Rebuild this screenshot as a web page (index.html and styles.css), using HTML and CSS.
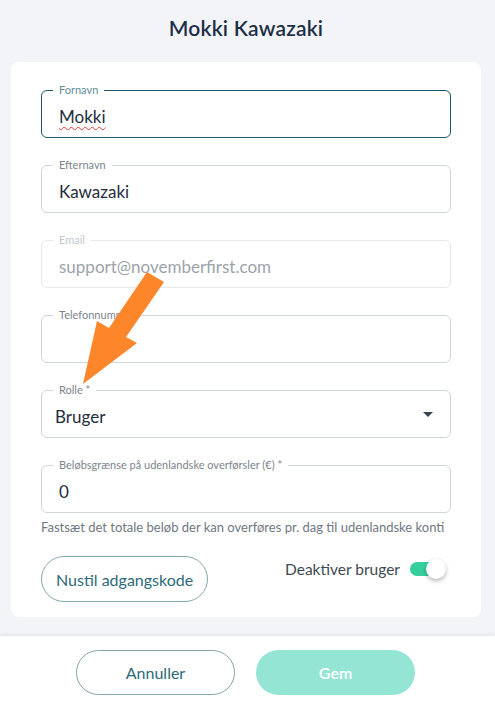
FILE: index.html
```html
<!DOCTYPE html>
<html lang="da">
<head>
  <meta charset="UTF-8">
  <meta name="viewport" content="width=device-width, initial-scale=1.0">
  <title>Mokki Kawazaki</title>
  <link rel="stylesheet" href="styles.css">
</head>
<body>
  <main class="page">
    <h1 class="title">Mokki Kawazaki</h1>

    <!-- User form card -->
    <section class="card">
      <div class="field focused">
        <span class="field-label">Fornavn</span>
        <span class="field-value spell">Mokki</span>
      </div>

      <div class="field">
        <span class="field-label">Efternavn</span>
        <span class="field-value">Kawazaki</span>
      </div>

      <div class="field disabled">
        <span class="field-label">Email</span>
        <span class="field-value">support@novemberfirst.com</span>
      </div>

      <div class="field">
        <span class="field-label">Telefonnummer</span>
        <span class="field-value"></span>
      </div>

      <div class="field select">
        <span class="field-label">Rolle *</span>
        <span class="field-value">Bruger</span>
        <span class="caret"></span>
      </div>

      <div class="field with-help">
        <span class="field-label">Beløbsgrænse på udenlandske overførsler (€) *</span>
        <span class="field-value">0</span>
      </div>
      <p class="help">Fastsæt det totale beløb der kan overføres pr. dag til udenlandske konti</p>

      <div class="card-actions">
        <button class="btn btn-outline btn-reset" type="button">Nustil adgangskode</button>
        <label class="toggle-row">
          <span>Deaktiver bruger</span>
          <span class="toggle"><span class="knob"></span></span>
        </label>
      </div>
    </section>

    <!-- Annotation arrow -->
    <svg class="arrow" width="100" height="120" viewBox="0 0 100 120">
      <polygon points="77,2 94,12 56,67 67,73 13,114 27,51 39,58" fill="#fd852a"/>
    </svg>
  </main>

  <footer class="footer">
    <button class="btn btn-outline" type="button">Annuller</button>
    <button class="btn btn-primary" type="button">Gem</button>
  </footer>
</body>
</html>
```

FILE: styles.css
```css
body {
  margin: 0;
  font-family: "Lato", "Noto Sans", sans-serif;
  background-color: #f3f4f7;
  color: #1f2d3d;
}

.page {
  position: relative;
  padding: 0 14px 19px 11px;
}

.title {
  margin: 0;
  padding: 15px 0 22px;
  text-align: center;
  font-size: 21px;
  font-weight: 600;
  color: #1c2f47;
  letter-spacing: 0.2px;
}

.card {
  background-color: #ffffff;
  border-radius: 8px;
  padding: 28px 30px 15px;
  display: flex;
  flex-direction: column;
  gap: 27px;
}

.field {
  position: relative;
  height: 46px;
  border: 1px solid #cfd5db;
  border-radius: 6px;
  display: flex;
  align-items: center;
  padding: 0 17px;
}

.field-label {
  position: absolute;
  top: -8px;
  left: 11px;
  padding: 0 6px;
  background-color: #ffffff;
  font-size: 11px;
  color: #7b848d;
  line-height: 14px;
}

.field-value {
  font-size: 17px;
  padding-top: 4px;
}

.spell {
  text-decoration: underline wavy #e53935;
  text-decoration-thickness: 1px;
  text-underline-offset: 3px;
}

.focused {
  border: 1.5px solid #1d5868;
}

.focused .field-label {
  color: #5d8f99;
}

.disabled {
  border-color: #e6e9ec;
}

.disabled .field-label {
  color: #c2c7cc;
}

.disabled .field-value {
  color: #9ca3aa;
}

.select {
  padding-left: 13px;
}

.caret {
  margin-left: auto;
  margin-right: 0;
  width: 0;
  height: 0;
  border-left: 5px solid transparent;
  border-right: 5px solid transparent;
  border-top: 5px solid #3a4450;
}

.with-help {
  margin-bottom: -21px;
}

.help {
  margin: 0;
  font-size: 13px;
  color: #6f7882;
}

.card-actions {
  display: flex;
  justify-content: space-between;
  align-items: flex-start;
  margin-top: -6px;
}

.btn {
  font-family: inherit;
  font-size: 16px;
  height: 46px;
  border-radius: 23px;
  cursor: pointer;
}

.btn-outline {
  background-color: #ffffff;
  border: 1px solid #86a5ab;
  color: #2c6a79;
}

.btn-reset {
  padding: 0 14px;
}

.toggle-row {
  display: flex;
  align-items: center;
  gap: 10px;
  font-size: 15.5px;
  color: #3f4852;
  margin: 4px 8px 0 0;
}

.toggle {
  position: relative;
  width: 33px;
  height: 14px;
  border-radius: 7px;
  background-color: #34cf9c;
}

.knob {
  position: absolute;
  top: -3px;
  right: -3px;
  width: 20px;
  height: 20px;
  border-radius: 50%;
  background-color: #ffffff;
  box-shadow: 0 2px 4px rgba(0, 0, 0, 0.3);
}

.arrow {
  position: absolute;
  left: 70px;
  top: 270px;
}

.footer {
  background-color: #ffffff;
  box-shadow: 0 -2px 4px rgba(0, 0, 0, 0.06);
  display: flex;
  justify-content: center;
  gap: 21px;
  padding: 14px 4px 20px 0;
}

.footer .btn {
  width: 159px;
  height: 45px;
}

.btn-primary {
  background-color: #95e5d4;
  border: none;
  color: #ffffff;
  font-weight: 600;
}
```
